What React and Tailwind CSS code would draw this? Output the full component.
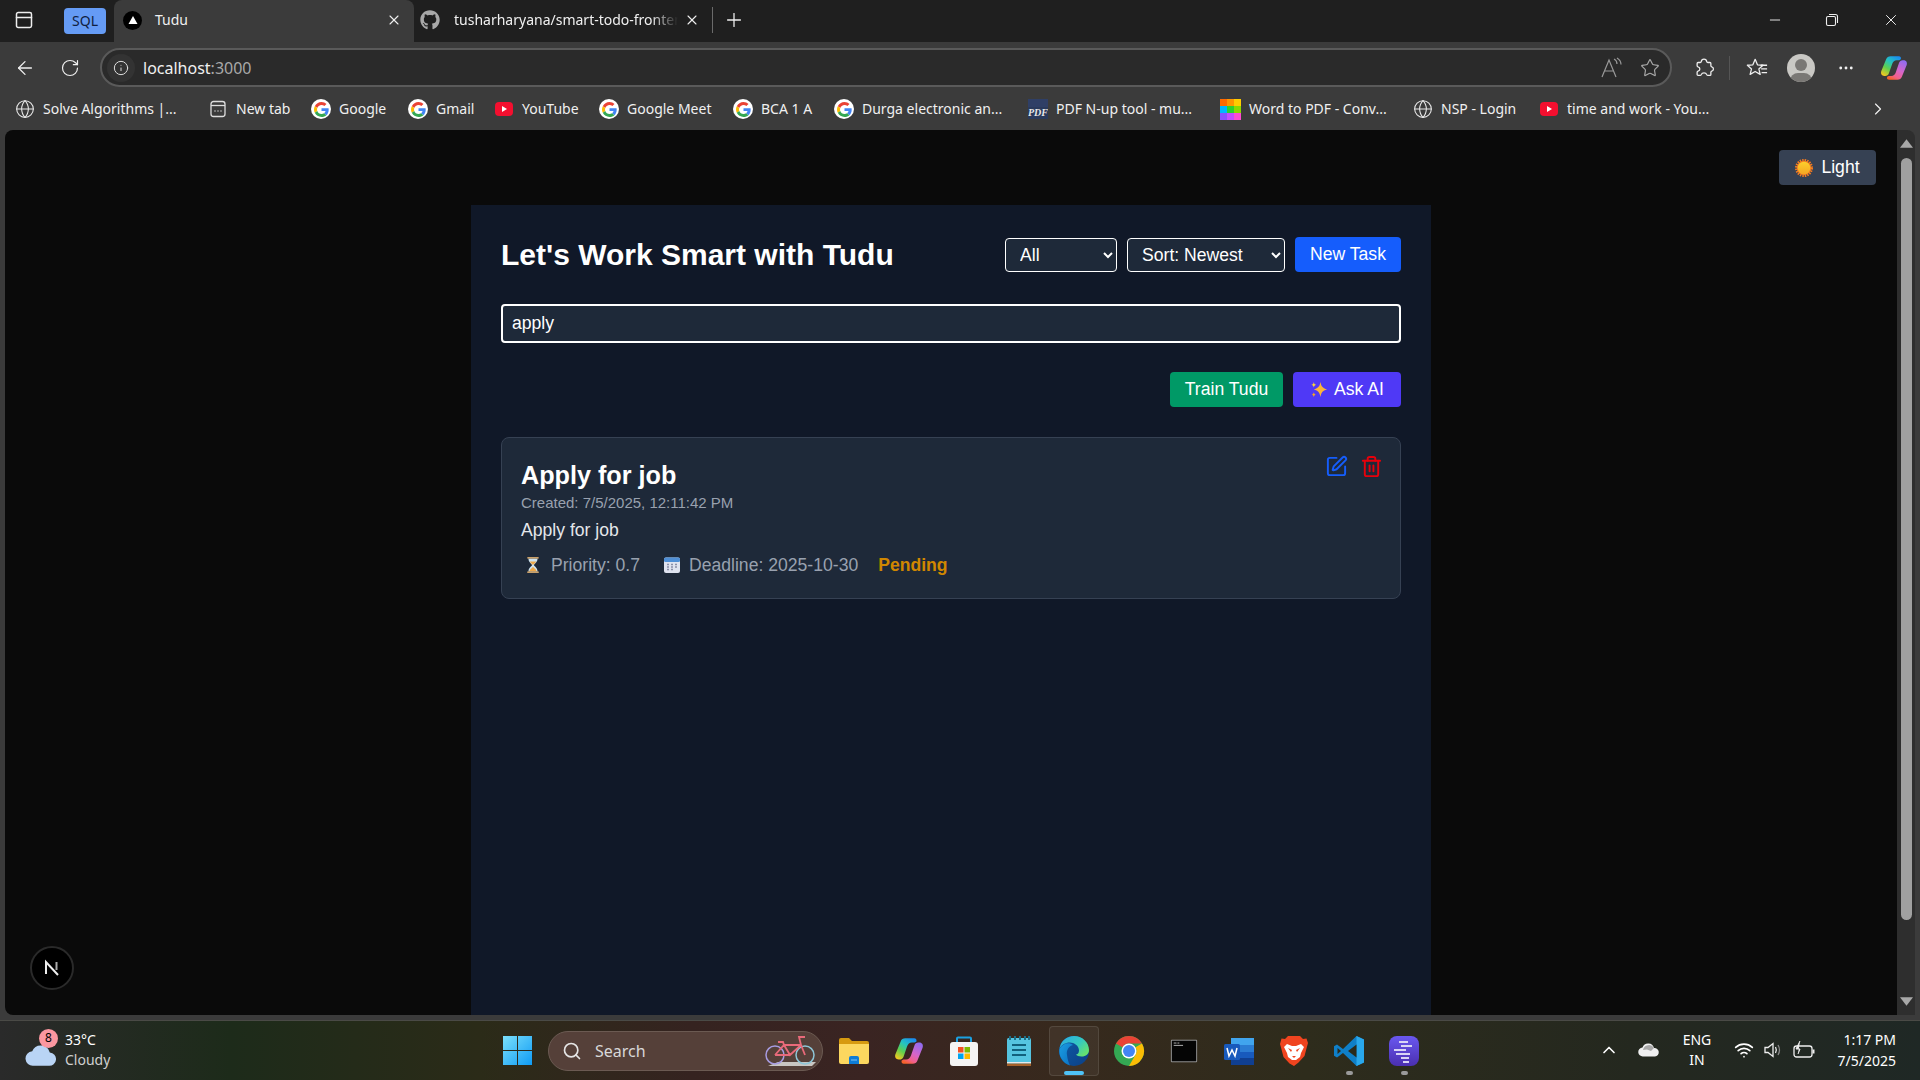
import React from "react";
import { ArrowLeft, RotateCw, Info, Globe, Plus, X, Minus, ChevronRight, ChevronUp, Search, SquarePen, Trash2, Star, MoreHorizontal, PanelTop, Wifi } from "lucide-react";
import { FaGithub } from "react-icons/fa";

const G = ({ s = 20 }) => (
  <span className="flex items-center justify-center rounded-full bg-white shrink-0" style={{ width: s, height: s }}>
    <svg viewBox="0 0 48 48" width={s - 5} height={s - 5}>
      <path fill="#EA4335" d="M24 9.5c3.54 0 6.71 1.22 9.21 3.6l6.85-6.85C35.9 2.38 30.47 0 24 0 14.62 0 6.51 5.38 2.56 13.22l7.98 6.19C12.43 13.72 17.74 9.5 24 9.5z" />
      <path fill="#4285F4" d="M46.98 24.55c0-1.57-.15-3.09-.38-4.55H24v9.02h12.94c-.58 2.96-2.26 5.48-4.78 7.18l7.73 6c4.51-4.18 7.09-10.36 7.09-17.65z" />
      <path fill="#FBBC05" d="M10.53 28.59c-.48-1.45-.76-2.99-.76-4.59s.27-3.14.76-4.59l-7.98-6.19C.92 16.46 0 20.12 0 24c0 3.88.92 7.54 2.56 10.78l7.97-6.19z" />
      <path fill="#34A853" d="M24 48c6.48 0 11.93-2.13 15.89-5.81l-7.73-6c-2.15 1.45-4.92 2.3-8.16 2.3-6.26 0-11.57-4.22-13.47-9.91l-7.98 6.19C6.51 42.62 14.62 48 24 48z" />
    </svg>
  </span>
);
const Yt = () => (
  <svg viewBox="0 0 20 20" width="20" height="20" className="shrink-0"><rect x="1" y="3" width="18" height="14" rx="4" fill="#f40f2f" /><path d="M8 7l5 3-5 3z" fill="#fff" /></svg>
);
const Glob = () => <Globe size={20} strokeWidth={1.3} className="text-[#e8e8e8] shrink-0" />;
const NewTabIc = () => (
  <svg viewBox="0 0 20 20" width="20" height="20" fill="none" stroke="#ddd" strokeWidth="1.3" className="shrink-0"><rect x="3" y="2.5" width="14" height="15" rx="2.5" /><path d="M3 6.5h14" /><path d="M6.5 12h1M9.5 12h1M12.5 12h1" strokeWidth="1.6" /></svg>
);
const PdfIc = () => (
  <svg viewBox="0 0 20 20" width="20" height="20" className="shrink-0"><rect width="20" height="20" fill="#2a3a5c" /><rect y="0" width="20" height="8" fill="#2f3f66" /><text x="10" y="17" fontSize="10" fontStyle="italic" fontWeight="700" fill="#e8e8e8" textAnchor="middle" fontFamily="Liberation Serif, serif">PDF</text></svg>
);
const WordPdfIc = () => (
  <svg viewBox="0 0 21 21" width="21" height="21" className="shrink-0">
    {["#ff6a00", "#ff9500", "#ffcc00", "#00b7ff", "#2ed12e", "#8cd900", "#8a4fff", "#c44dff", "#ff4dd2"].map((c, i) => (
      <rect key={i} x={(i % 3) * 7} y={Math.floor(i / 3) * 7} width="7" height="7" fill={c} />
    ))}
  </svg>
);

const bookmarks = [
  [<Glob />, "Solve Algorithms |...", "w-[193px]"],
  [<NewTabIc />, "New tab", "w-[103px]"],
  [<G />, "Google", "w-[97px]"],
  [<G />, "Gmail", "w-[86px]"],
  [<Yt />, "YouTube", "w-[105px]"],
  [<G />, "Google Meet", "w-[134px]"],
  [<G />, "BCA 1 A", "w-[101px]"],
  [<G />, "Durga electronic an...", "w-[194px]"],
  [<PdfIc />, "PDF N-up tool - mu...", "w-[192px]"],
  [<WordPdfIc />, "Word to PDF - Conv...", "w-[193px]"],
  [<Glob />, "NSP - Login", "w-[126px]"],
  [<Yt />, "time and work - You...", "w-[326px]"],
];

const CopilotMark = ({ s = 28, id = "a" }) => (
  <svg viewBox="0 0 32 32" width={s} height={s} className="shrink-0">
    <defs>
      <linearGradient id={`cl${id}`} x1="0.8" y1="0" x2="0.15" y2="1"><stop offset="0" stopColor="#1a8cf0" /><stop offset="0.35" stopColor="#25c4c0" /><stop offset="0.65" stopColor="#5ed04f" /><stop offset="1" stopColor="#f6c81f" /></linearGradient>
      <linearGradient id={`cr${id}`} x1="0.8" y1="0" x2="0.25" y2="1"><stop offset="0" stopColor="#8f6cf0" /><stop offset="0.5" stopColor="#d765c8" /><stop offset="0.8" stopColor="#f2608a" /><stop offset="1" stopColor="#f4622a" /></linearGradient>
    </defs>
    <path d="M20 29.5h-9.5c-2 0-3-1.500-2.300-3.500l1.800-1H13c2.500 0 4-1.500 5-4l3.800-11c.7-2 2.200-3 4.200-3h1c3 0 4.500 2.500 3.500 5.500L25 26c-.8 2.300-2.700 3.500-5 3.500z" fill={`url(#cr${id})`} />
    <path d="M12 2.500h9.500c2 0 3 1.500 2.300 3.500l-1.800 1H19c-2.500 0-4 1.500-5 4l-3.800 11c-.7 2-2.200 3-4.200 3H5c-3 0-4.500-2.500-3.500-5.500L7 6c.8-2.300 2.700-3.500 5-3.500z" fill={`url(#cl${id})`} />
  </svg>
);

const IcExplorer = () => (
  <svg viewBox="0 0 32 32" width="32" height="32"><path d="M1 5a2 2 0 012-2h8l3 3h15a2 2 0 012 2v4H1z" fill="#d79a10" /><path d="M1 9h30v18a2 2 0 01-2 2H3a2 2 0 01-2-2z" fill="#fcd75f" /><path d="M11 23a2 2 0 012-2h6a2 2 0 012 2v6H11z" fill="#0e7cd6" /><path d="M13 25h6" stroke="#7cc4f5" strokeWidth="1" /></svg>
);
const IcCopilot = () => <CopilotMark s={30} id="t" />;
const IcStore = () => (
  <svg viewBox="0 0 32 32" width="32" height="32"><path d="M9 8V3.500a1 1 0 011-1h12a1 1 0 011 1V8" fill="none" stroke="#1ba1e2" strokeWidth="2" /><rect x="2" y="7" width="28" height="24" rx="3" fill="#f4f4f4" /><rect x="10" y="12" width="5.500" height="5.500" fill="#f25022" /><rect x="16.500" y="12" width="5.500" height="5.500" fill="#7fba00" /><rect x="10" y="18.500" width="5.500" height="5.500" fill="#00a4ef" /><rect x="16.500" y="18.500" width="5.500" height="5.500" fill="#ffb900" /></svg>
);
const IcNotepad = () => (
  <svg viewBox="0 0 32 32" width="32" height="32"><rect x="4" y="3" width="24" height="28" rx="1.500" fill="#55c4e0" /><rect x="4" y="27" width="24" height="1.500" fill="#e8e8e8" /><rect x="4" y="28.500" width="24" height="2.500" fill="#a5612a" /><path d="M7 1v4M12 1v4M17 1v4M22 1v4M26 1v4" stroke="#1c6f88" strokeWidth="2" /><path d="M9 10h14M9 15h14M9 20h14" stroke="#11607c" strokeWidth="2" /></svg>
);
const IcEdge = () => (
  <svg viewBox="0 0 32 32" width="32" height="32">
    <defs>
      <linearGradient id="ed1" x1="0" y1="0" x2="1" y2="0.7"><stop offset="0" stopColor="#2aa8e8" /><stop offset="0.6" stopColor="#35c9c0" /><stop offset="1" stopColor="#66e36e" /></linearGradient>
      <linearGradient id="ed2" x1="0" y1="0" x2="1" y2="1"><stop offset="0" stopColor="#0f5ea8" /><stop offset="1" stopColor="#0c3f86" /></linearGradient>
      <linearGradient id="ed3" x1="0" y1="0" x2="1" y2="1"><stop offset="0" stopColor="#1b9de2" /><stop offset="1" stopColor="#0a6fc0" /></linearGradient>
    </defs>
    <circle cx="16" cy="16" r="15" fill="url(#ed2)" />
    <path d="M12 30.500C4 28 .5 20 1.500 14 5 8 11 7 15 10c-4 1-7 5-6 10 .5 4 1.500 8 3 10.500z" fill="url(#ed3)" />
    <path d="M1.500 14C2.500 6 9 1 16 1c9 0 15 7 15 14 0 4-3 6.500-7.500 6.500-2.500 0-5-1-5.500-2 1 0 3-1 3-4 0-5-5-8-9-8C7 7.500 3 10 1.500 14z" fill="url(#ed1)" />
  </svg>
);
const IcChrome = () => (
  <svg viewBox="0 0 32 32" width="32" height="32">
    <circle cx="16" cy="16" r="15" fill="#34a853" />
    <path d="M16 1a15 15 0 0113 7.500H16a7.500 7.500 0 00-6.500 3.750L3 8.500A15 15 0 0116 1z" fill="#ea4335" />
    <path d="M29 8.500A15 15 0 0116 31l6.500-11.250A7.500 7.500 0 0022.500 12.300z" fill="#fbbc05" />
    <circle cx="16" cy="16" r="7.500" fill="#fff" /><circle cx="16" cy="16" r="6" fill="#4285f4" />
  </svg>
);
const IcTerm = () => (
  <svg viewBox="0 0 32 32" width="30" height="30"><rect x="2" y="4" width="28" height="24" rx="1" fill="#9a9a9a" /><rect x="3" y="5" width="26" height="22" fill="#050505" /><path d="M5 7.500h3M9 7.500h2M5 10h10" stroke="#bbb" strokeWidth="1" /></svg>
);
const IcWord = () => (
  <svg viewBox="0 0 32 32" width="32" height="32"><rect x="8" y="3" width="23" height="27" rx="1" fill="#2b7cd3" /><rect x="8" y="3" width="23" height="7" fill="#41a5ee" /><rect x="8" y="17" width="23" height="6" fill="#185abd" /><rect x="8" y="23" width="23" height="7" fill="#103f91" /><rect x="1" y="9" width="16" height="16" rx="1.500" fill="#185abd" /><path d="M4 13l2 8 3-6 3 6 2-8" fill="none" stroke="#fff" strokeWidth="1.500" /></svg>
);
const IcBrave = () => (
  <svg viewBox="0 0 32 32" width="32" height="32"><path d="M10 1h12l3 3 3.500-.5 1.500 4.500-1 3.500-2.500 9.500-6 6.500L16 31l-4.500-2.500-6-6.500L3 12.500 2 9l1.500-5.500L7 4z" fill="#f0441f" /><path d="M9 9l5 2h4l5-2 3 3-3 6-1 4-4 3h-4l-4-3-1-4-3-6z" fill="#fff" /><path d="M10 13l4 2-1 2zM22 13l-4 2 1 2zM14 21h4l-2 2z" fill="#f0441f" /></svg>
);
const IcVs = () => (
  <svg viewBox="0 0 32 32" width="32" height="32"><path d="M23.500 1L31 4.500v23L23.500 31 10 18l-6 4.500-3-1.800V11.300L4 9.500 10 14z" fill="#0f7fc8" /><path d="M23.500 1L31 4.500v23L23.500 31z" fill="#29a8ec" /><path d="M23.500 9.500v13L15 16z" fill="#2a2a1c" /><path d="M4.500 13v6L8 16z" fill="#2a2a1c" /></svg>
);
const IcTasks = () => (
  <svg viewBox="0 0 32 32" width="32" height="32">
    <defs><linearGradient id="tsk" x1="0" y1="0" x2="0" y2="1"><stop offset="0" stopColor="#6a58f0" /><stop offset="1" stopColor="#4a2fb0" /></linearGradient></defs>
    <rect x="1" y="1" width="30" height="30" rx="8" fill="url(#tsk)" />
    <path d="M11 7h9M13 11h11M6 15h12M8 19h14M13 23h8M15 27h6" stroke="#d8d4f5" strokeWidth="2" />
  </svg>
);
const Bike = () => (
  <svg viewBox="0 0 52 34" width="52" height="34" fill="none" className="shrink-0">
    <path d="M4 32h44l4-4H14z" fill="#c9c6c2" />
    <circle cx="11" cy="21" r="9" stroke="#a79be0" strokeWidth="1.500" /><circle cx="41" cy="21" r="9" stroke="#8ec6d8" strokeWidth="1.500" />
    <path d="M11 21l9-10h17l4 10M20 11l6 10 11-10M26 21h-15M37 11l-2-8h6M20 11l-1-3h-5" stroke="#e86a7a" strokeWidth="1.800" />
  </svg>
);

const taskIcons = [IcExplorer, IcCopilot, IcStore, IcNotepad, IcEdge, IcChrome, IcTerm, IcWord, IcBrave, IcVs, IcTasks];

function Chrome() {
  return (
    <div className="shrink-0 text-[#f0f0f0]" style={{ fontFamily: '"Noto Sans", sans-serif' }}>
      {/* tab strip */}
      <div className="h-[42px] bg-[#1f1f1f] flex items-end">
        <div className="w-[64px] h-[42px] flex items-center pl-[14px] pb-[2px]"><PanelTop size={20} strokeWidth={1.8} className="text-[#eee]" /></div>
        <div className="w-[50px] h-[42px] flex items-start pt-2">
          <div className="w-[42px] h-[26px] rounded bg-[#659bf5] text-[#10203f] text-sm flex items-center justify-center">SQL</div>
        </div>
        <div className="w-[300px] h-[42px] bg-[#3b3b3b] rounded-t-lg flex items-center pl-2 pr-[12px] pb-[2px] text-sm">
          <span className="w-[19px] h-[19px] rounded-full bg-black flex items-center justify-center shrink-0 ml-px">
            <svg viewBox="0 0 10 10" width="10" height="10"><path d="M5 1l4.500 8h-9z" fill="#fff" /></svg>
          </span>
          <span className="ml-[13px] flex-1">Tudu</span>
          <X size={16} strokeWidth={1.6} />
        </div>
        <div className="w-[298px] h-[42px] flex items-center pl-[6px] pr-[12px] pb-[2px] text-sm">
          <FaGithub size={20} className="text-[#a8a8a8] shrink-0" />
          <span className="ml-[14px] w-[224px] overflow-hidden whitespace-nowrap [mask-image:linear-gradient(90deg,#000_88%,transparent)]">tusharharyana/smart-todo-frontend</span>
          <X size={16} strokeWidth={1.6} className="ml-[6px] shrink-0" />
        </div>
        <div className="w-px h-[26px] bg-[#6a6a6a] mb-[9px]" />
        <div className="h-[42px] flex items-center ml-[10px] pb-[2px]"><Plus size={22} strokeWidth={1.4} /></div>
        <div className="flex-1" />
        <div className="h-[42px] w-[165px] flex items-center pl-[12px] pb-[2px]">
          <Minus size={16} strokeWidth={1.4} />
          <svg viewBox="0 0 14 14" width="14" height="14" fill="none" stroke="#eee" strokeWidth="1.100" className="ml-[42px]"><rect x="1.500" y="3.500" width="9" height="9" rx="1.500" /><path d="M4 1.500h6.500a2 2 0 012 2V10" /></svg>
          <X size={18} strokeWidth={1.3} className="ml-[43px]" />
        </div>
      </div>
      {/* toolbar */}
      <div className="h-[46px] bg-[#3b3b3b] flex items-center pt-[5px]">
        <div className="w-[49px] flex justify-center"><ArrowLeft size={22} strokeWidth={1.4} /></div>
        <div className="w-[41px] flex justify-center"><RotateCw size={20} strokeWidth={1.4} /></div>
        <div className="ml-[10px] w-[1572px] h-[39px] rounded-full bg-[#2a2a2a] border-2 border-[#5a5a5a] flex items-center pl-[5px] pr-[10px] shrink-0">
          <span className="w-[28px] h-[28px] rounded-full bg-[#333] flex items-center justify-center"><Info size={16} strokeWidth={1.5} className="text-[#ddd]" /></span>
          <span className="ml-[8px] text-base">localhost<span className="text-[#a8a8a8]">:3000</span></span>
          <span className="flex-1" />
          <svg viewBox="0 0 22 22" width="22" height="22" fill="none" stroke="#9a9a9a" strokeWidth="1.200" className="mr-[18px]"><path d="M2 20L9 3l7 17M4.500 14h9" /><path d="M14 2c2 1 3 3 3 5M17 1c2.500 1.500 4 4 4 6.500" /></svg>
          <Star size={20} strokeWidth={1.4} className="text-[#aaa]" />
        </div>
        <div className="flex items-center ml-[21px]">
          <svg viewBox="0 0 24 24" width="22" height="22" fill="none" stroke="#eee" strokeWidth="1.400" strokeLinejoin="round" className="shrink-0"><path d="M9 5c.2-1.600 1.500-2.800 3-2.800S14.800 3.400 15 5c.1.600.6 1 1.200 1h2.300a1 1 0 011 1v2.500c0 .6.400 1 1 1.200 1.200.3 1.800 1.300 1.800 2.300s-.6 2-1.800 2.300c-.6.200-1 .6-1 1.200V19a1 1 0 01-1 1H16c-.6 0-1-.4-1.200-1-.3-1.100-1.500-1.800-2.800-1.800s-2.500.7-2.800 1.800c-.2.600-.6 1-1.200 1H5.500a1 1 0 01-1-1v-2.500c0-.6.400-1 1-1.200C6.700 15 7.500 14 7.500 13s-.8-2-2-2.300c-.6-.2-1-.6-1-1.200V7a1 1 0 011-1h2.300C8.400 6 8.900 5.600 9 5z" /></svg>
          <div className="w-px h-[24px] bg-[#555] ml-[14px]" />
          <svg viewBox="0 0 24 24" width="22" height="22" fill="none" stroke="#eee" strokeWidth="1.400" strokeLinejoin="round" className="ml-[16px] shrink-0"><path d="M10 2.500l2.500 6 6 .5-4.500 4 1.500 6-5.500-3.200L4.500 19 6 13 1.500 9l6-.5z" /><path d="M16 9h7M16.500 13h6.500M17 17h6" /></svg>
          <span className="w-[28px] h-[28px] rounded-full bg-[#c9c8c4] ml-[19px] relative overflow-hidden shrink-0">
            <span className="absolute left-[8px] top-[5px] w-[12px] h-[12px] rounded-full bg-[#7a7875]" />
            <span className="absolute left-[3px] top-[19px] w-[22px] h-[16px] rounded-full bg-[#7a7875]" />
          </span>
          <MoreHorizontal size={18} strokeWidth={1.8} className="ml-[22px]" />
          <span className="ml-[25px] shrink-0"><CopilotMark s={28} id="b" /></span>
        </div>
      </div>
      {/* bookmarks */}
      <div className="h-[42px] bg-[#3b3b3b] flex items-center pl-[15px] text-sm whitespace-nowrap">
        {bookmarks.map(([ic, t, w], i) => (
          <div key={i} className={`flex items-center gap-[8px] shrink-0 ${w}`}>{ic}<span>{t}</span></div>
        ))}
        <ChevronRight size={20} strokeWidth={1.4} className="ml-[3px]" />
      </div>
    </div>
  );
}

function Emoji({ kind }) {
  if (kind === "sun")
    return (
      <svg viewBox="0 0 20 20" width="18" height="18" className="shrink-0">
        <defs><linearGradient id="sun" x1="0" y1="0" x2="0" y2="1"><stop offset="0" stopColor="#fcd02b" /><stop offset="1" stopColor="#f5a623" /></linearGradient></defs>
        <circle cx="10" cy="10" r="8.500" fill="none" stroke="#f47c20" strokeWidth="3" strokeDasharray="1.600 1.100" />
        <circle cx="10" cy="10" r="8" fill="#f47c20" /><circle cx="10" cy="10" r="7" fill="url(#sun)" />
      </svg>
    );
  if (kind === "sparkle")
    return (
      <svg viewBox="0 0 20 20" width="19" height="19" className="shrink-0"><path d="M11 2c1 5 2 6 7 8-5 1.500-6 3-7 8-1-5-2-6.500-7-8 5-2 6-3 7-8z" fill="#fcb43a" /><path d="M4 2c.4 2 .8 2.500 2.500 3C4.800 5.500 4.400 6 4 8c-.4-2-.8-2.500-2.500-3C3.200 4.500 3.600 4 4 2z" fill="#fdd835" /><path d="M4 13c.4 1.600.8 2 2 2.500-1.200.4-1.600.9-2 2.500-.4-1.600-.8-2-2-2.500 1.200-.5 1.600-.9 2-2.500z" fill="#f5a623" /></svg>
    );
  if (kind === "glass")
    return (
      <svg viewBox="0 0 16 20" width="16" height="18" className="shrink-0 ml-[4px]"><rect x="1.500" y="1" width="13" height="2" rx="1" fill="#c9a06a" /><rect x="1.500" y="17" width="13" height="2" rx="1" fill="#c9a06a" /><path d="M3 3h10c0 4-3 5-4 7 1 2 4 3 4 7H3c0-4 3-5 4-7-1-2-4-3-4-7z" fill="#cfe3ef" /><path d="M4.500 6h7c-1 2-2.500 2.500-3.500 4-1-1.500-2.500-2-3.500-4zM4 17c.5-2.500 3-3.500 4-5 1 1.500 3.500 2.500 4 5z" fill="#eea94a" /></svg>
    );
  return (
    <svg viewBox="0 0 18 18" width="18" height="18" className="shrink-0"><rect x="1" y="1.500" width="16" height="15.500" rx="2" fill="#dfe3f0" /><rect x="1" y="1.500" width="16" height="4.500" rx="1.500" fill="#4f8fd6" /><path d="M4 8.500h2M8 8.500h2M12 8.500h2M4 11h2M8 11h2M12 11h2M4 13.500h2M8 13.500h2" stroke="#8a8fa8" strokeWidth="1.400" /></svg>
  );
}

function Page() {
  return (
    <div className="flex-1 min-h-0 bg-[#3b3b3b] flex pl-[5px] pb-[5px]">
      <div className="flex-1 min-w-0 bg-[#0a0a0a] rounded-tl-lg rounded-bl-lg relative overflow-hidden text-white" style={{ fontFamily: '"Liberation Sans", Arial, sans-serif' }}>
        <button className="absolute top-5 right-[21px] w-[97px] h-[35px] rounded bg-[#364153] flex items-center justify-center gap-[8px] text-[17.6px]">
          <Emoji kind="sun" />Light
        </button>
        <div className="w-[960px] h-[810px] mt-[75px] mx-auto bg-[#101828] px-[30px] pt-8">
          <div className="flex items-center justify-between h-[35px]">
            <h1 className="text-3xl font-bold">Let's Work Smart with Tudu</h1>
            <div className="flex items-center gap-[10px]">
              <select defaultValue="All" className="w-[112px] h-[34px] px-[10px] rounded bg-[#1e2939] border border-white text-[17.6px]"><option>All</option></select>
              <select defaultValue="Sort: Newest" className="w-[158px] h-[34px] px-[10px] rounded bg-[#1e2939] border border-white text-[17.6px]"><option>Sort: Newest</option></select>
              <button className="w-[106px] h-[35px] rounded bg-[#155dfc] text-[17.6px] pb-px">New Task</button>
            </div>
          </div>
          <input readOnly value="apply" className="mt-8 block w-full h-[39px] px-[9px] rounded bg-[#1e2939] border-2 border-white text-[17.6px] outline-none" />
          <div className="flex justify-end gap-[10px] mt-[29px]">
            <button className="w-[113px] h-[35px] rounded bg-[#009966] text-[17.6px]">Train Tudu</button>
            <button className="w-[108px] h-[35px] rounded bg-[#4f39f6] text-[17.6px] flex items-center justify-center gap-[5px]"><Emoji kind="sparkle" />Ask AI</button>
          </div>
          <div className="mt-[30px] relative h-[162px] rounded-lg bg-[#1e2939] border border-[#364153] pl-[19px] pr-5 pt-[21px]">
            <div className="absolute top-[17px] right-[17px] flex items-center gap-[12px]">
              <SquarePen size={23} strokeWidth={2} className="text-[#155dfc]" />
              <Trash2 size={23} strokeWidth={2} className="text-[#e7000b]" />
            </div>
            <h2 className="text-[25.2px] leading-8 font-bold">Apply for job</h2>
            <p className="text-[15px] leading-5 text-[#99a1af] mt-[2px]">Created: 7/5/2025, 12:11:42 PM</p>
            <p className="text-[17.6px] leading-6 text-[#e5e7eb] mt-[5px]">Apply for job</p>
            <div className="flex items-center mt-[11px] leading-6 text-[17.6px] text-[#99a1af]">
              <span className="flex items-center gap-[10px]"><Emoji kind="glass" />Priority: 0.7</span>
              <span className="flex items-center gap-[8px] ml-[23px]"><Emoji kind="cal" />Deadline: 2025-10-30</span>
              <span className="font-bold text-[#d08700] ml-5">Pending</span>
            </div>
          </div>
        </div>
        <div className="absolute left-[25px] bottom-[25px] w-[44px] h-[44px] rounded-full bg-black border-2 border-[#2a2a2a] flex items-center justify-center">
          <svg viewBox="0 0 20 20" width="20" height="20" fill="none"><path d="M4 16V4l12 13" stroke="#eee" strokeWidth="2" /><path d="M14.500 4v8" stroke="#aaa" strokeWidth="2" /></svg>
        </div>
      </div>
      {/* scrollbar */}
      <div className="w-[18px] mr-[5px] bg-[#2e2e2e] rounded-tr-lg flex flex-col items-center pt-[9px] pb-[9px] shrink-0">
        <svg viewBox="0 0 12 8" width="13" height="9"><path d="M6 0l6 8H0z" fill="#a8a8a8" /></svg>
        <div className="w-[11px] h-[762px] rounded-full bg-[#a0a0a0] mt-[10px]" />
        <div className="flex-1" />
        <svg viewBox="0 0 12 8" width="13" height="9"><path d="M6 8L0 0h12z" fill="#a8a8a8" /></svg>
      </div>
    </div>
  );
}

function Taskbar() {
  return (
    <div className="h-[60px] shrink-0 border-t border-[#4a4a46] flex items-center text-white relative bg-[linear-gradient(90deg,#2a2a2a_0%,#1d2b1a_12%,#2b2b18_25%,#352320_36%,#3a2422_45%,#37291d_55%,#2e2c1c_68%,#24281f_85%,#1f2825_100%)]" style={{ fontFamily: '"Noto Sans", sans-serif' }}>
      <div className="w-[503px] shrink-0 flex items-center pl-[25px] pb-[2px]">
        <div className="relative w-[40px] h-[40px] flex items-end">
          <svg viewBox="0 0 30 20" width="31" height="21" className="mb-[4px]"><path d="M8 20a7 7 0 01-1-14 9 9 0 0117 1 6.500 6.500 0 01-1 13z" fill="#b9d4f5" /></svg>
          <span className="absolute left-[14px] top-[-1px] w-[19px] h-[19px] rounded-full bg-[#fb97a0] text-black text-xs flex items-center justify-center">8</span>
        </div>
        <div className="leading-[20px] text-sm">
          <div>33°C</div>
          <div className="text-[#cfcfcf]">Cloudy</div>
        </div>
      </div>
      <svg viewBox="0 0 29 29" width="29" height="29" className="shrink-0">
        <defs><linearGradient id="win" x1="0" y1="0" x2="1" y2="1"><stop offset="0" stopColor="#7be0fb" /><stop offset="1" stopColor="#0f9bf5" /></linearGradient></defs>
        <path d="M0 0h14v14H0zM15 0h14v14H15zM0 15h14v14H0zM15 15h14v14H15z" fill="url(#win)" />
      </svg>
      <div className="ml-[16px] w-[275px] h-[40px] rounded-full bg-[#554039] border border-[#6b5a52] flex items-center pl-[13px] pr-[6px] shrink-0">
        <Search size={20} strokeWidth={2} className="text-[#e5e5e5]" />
        <span className="ml-[13px] text-base text-[#d8d8d8] flex-1">Search</span>
        <Bike />
      </div>
      <div className="ml-[3px] flex items-center shrink-0">
        {taskIcons.map((I, i) => (
          <div key={i} className="w-[55px] h-[50px] flex items-center justify-center relative">
            {i === 4 && <span className="absolute left-[3px] top-0 w-[50px] h-[50px] rounded bg-white/5 border border-white/10" />}
            <span className="relative flex"><I /></span>
            {i === 4 && <span className="absolute bottom-[1px] left-[18px] w-[20px] h-[4px] rounded-full bg-[#4fc3f7]" />}
            {(i === 9 || i === 10) && <span className="absolute bottom-[1px] left-[25px] w-[7px] h-[4px] rounded-full bg-[#9a9a9a]" />}
          </div>
        ))}
      </div>
      <div className="flex-1" />
      <div className="flex items-center shrink-0 pr-[24px] pb-[2px] text-sm">
        <ChevronUp size={20} strokeWidth={2} />
        <svg viewBox="0 0 22 14" width="22" height="14" className="ml-[19px]"><path d="M5 13.500a4.500 4.500 0 01-.5-9A6 6 0 0116 5a4.200 4.200 0 011 8.500z" fill="#f0f0f0" /><path d="M5 7A6 6 0 0116 5l-3 3-4-1.500z" fill="#a8a8a8" /></svg>
        <div className="ml-[19px] text-center leading-[20px] w-[36px]"><div>ENG</div><div>IN</div></div>
        <Wifi size={20} strokeWidth={2} className="ml-[19px]" />
        <svg viewBox="0 0 20 20" width="20" height="20" fill="none" stroke="#eee" strokeWidth="1.300" className="ml-[9px]"><path d="M2 7.500h3L10 3.500v13l-5-4H2z" /><path d="M12.500 7c1 1.800 1 4.200 0 6" /><path d="M15 5c1.800 3 1.800 7 0 10" stroke="#888" /></svg>
        <svg viewBox="0 0 24 20" width="24" height="20" fill="none" stroke="#eee" strokeWidth="1.300" className="ml-[9px]"><rect x="2" y="6" width="18" height="11" rx="2.500" /><path d="M21.500 9.500v4" strokeWidth="2" /><path d="M8 1L4 9h4l-2 5" fill="#eee" stroke="#eee" strokeWidth="1" /></svg>
        <div className="ml-[18px] text-right leading-[21px] w-[62px]"><div>1:17 PM</div><div>7/5/2025</div></div>
      </div>
    </div>
  );
}

export default function App() {
  return (
    <div className="h-screen w-full flex flex-col overflow-hidden bg-[#3b3b3b]">
      <Chrome />
      <Page />
      <Taskbar />
    </div>
  );
}
